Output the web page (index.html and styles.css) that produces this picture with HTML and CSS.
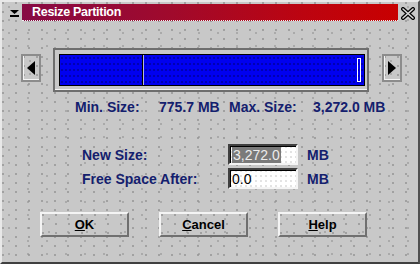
FILE: index.html
```html
<!DOCTYPE html>
<html lang="en">
<head>
    <meta charset="UTF-8">
    <title>Resize Partition</title>
    <link rel="stylesheet" href="styles.css">
</head>
<body>
    <div class="window dotted">
        <div class="titlebar">
            <div class="menu-btn">
                <svg width="9" height="7" viewBox="0 0 9 7">
                    <polygon points="0,0 9,0 4.5,4" fill="#000"/>
                    <rect x="0" y="5" width="9" height="2" fill="#000"/>
                </svg>
            </div>
            <div class="title">Resize Partition</div>
            <div class="close-btn">
                <svg width="14" height="13" viewBox="0 0 14 13">
                    <path d="M2 2 L12 11 M12 2 L2 11" stroke="#000" stroke-width="4" stroke-linecap="round"/>
                    <path d="M2 2 L12 11 M12 2 L2 11" stroke="#d8d8d8" stroke-width="1.6" stroke-linecap="round"/>
                </svg>
            </div>
        </div>

        <div class="slider-row">
            <button class="arrow-btn dotted">
                <svg width="8" height="14" viewBox="0 0 8 14"><polygon points="8,0 8,14 0,7" fill="#000"/></svg>
            </button>
            <div class="track">
                <div class="track-inner">
                    <div class="seg seg-used"></div>
                    <div class="seg seg-free"><span class="handle"></span></div>
                </div>
            </div>
            <button class="arrow-btn dotted">
                <svg width="8" height="14" viewBox="0 0 8 14"><polygon points="0,0 0,14 8,7" fill="#000"/></svg>
            </button>
        </div>

        <div class="size-info">
            <span>Min. Size:</span>
            <span>775.7 MB</span>
            <span>Max. Size:</span>
            <span>3,272.0 MB</span>
        </div>

        <div class="size-form">
            <label>New Size:</label>
            <div class="field"><span class="selected">3,272.0</span></div>
            <span class="unit">MB</span>

            <label>Free Space After:</label>
            <div class="field"><span>0.0</span></div>
            <span class="unit">MB</span>
        </div>

        <div class="actions">
            <button class="btn dotted"><u>O</u>K</button>
            <button class="btn dotted"><u>C</u>ancel</button>
            <button class="btn dotted"><u>H</u>elp</button>
        </div>
    </div>
</body>
</html>
```

FILE: styles.css
```css
* {
    margin: 0;
    padding: 0;
    box-sizing: border-box;
    font-family: 'Liberation Sans', Arial, sans-serif;
}

body {
    background: #c8c8c8;
}

/* speckled motif-style background */
.dotted {
    background-color: #c8c8c8;
    background-image:
        radial-gradient(circle at 1px 1px, #8c8c8c 0.6px, transparent 0.9px),
        radial-gradient(circle at 1px 1px, #9a9a9a 0.6px, transparent 0.9px);
    background-size: 13px 9px, 19px 13px;
    background-position: 0 0, 6px 4px;
}

.window {
    width: 420px;
    height: 264px;
    border: 2px solid;
    border-color: #e8e8e8 #505050 #404040 #e8e8e8;
}

.titlebar {
    display: flex;
    margin-top: 2px;
    height: 17px;
}

.menu-btn {
    width: 20px;
    display: flex;
    align-items: center;
    justify-content: center;
    padding-left: 4px;
    padding-top: 1px;
}

.title {
    width: 376px;
    background: linear-gradient(90deg, #870a44, #a00a2c 40%, #bc0410 75%, #c80000);
    color: #ffffff;
    font-weight: bold;
    font-size: 12.5px;
    letter-spacing: -0.3px;
    line-height: 17px;
    padding-left: 10px;
    border-bottom: 1px dotted #f0f0f0;
}

.close-btn {
    flex: 1;
    display: flex;
    align-items: center;
    justify-content: center;
    padding-top: 2px;
}

.slider-row {
    display: flex;
    align-items: flex-start;
    margin-top: 27px;
    padding-left: 19px;
}

.arrow-btn {
    width: 20px;
    height: 28px;
    margin-top: 6px;
    border: 2px solid #8c8c8c;
    box-shadow: inset 1px -1px 0 #f4f4f4;
    display: flex;
    align-items: center;
    justify-content: center;
    padding-right: 1px;
}

.track {
    width: 316px;
    height: 44px;
    margin: 0 13px 0 12px;
    border: 2px solid #6e6e6e;
    padding: 4px 2px 4px 4px;
    box-shadow: inset 0 -1px 0 #f4f4f4;
    background: #c8c8c8;
}

.track-inner {
    display: flex;
    height: 100%;
    border: 1px solid #000;
}

.seg {
    background-color: #0000f0;
    background-image: radial-gradient(circle at 1px 1px, #000090 0.6px, transparent 0.9px);
    background-size: 4px 6px;
    background-position: 1px 2px;
}

.seg-used {
    width: 83px;
    border-right: 1px solid #000;
}

.seg-free {
    flex: 1;
    border-left: 1px solid #b8b8d8;
    display: flex;
    align-items: center;
    justify-content: flex-end;
    padding-right: 3px;
}

.handle {
    width: 4px;
    height: 24px;
    border: 1px solid #ffffff;
}

.size-info {
    display: grid;
    grid-template-columns: 84px 70px 84px auto;
    margin-top: 7px;
    padding-left: 73px;
    color: #14206e;
    font-weight: bold;
    font-size: 14px;
    line-height: 16px;
}

.size-form {
    display: grid;
    grid-template-columns: 146px 70px auto;
    row-gap: 3px;
    margin-top: 29px;
    padding-left: 80px;
    color: #14206e;
    font-weight: bold;
    font-size: 14px;
    align-items: center;
}

.field {
    height: 21px;
    border: 2px solid;
    border-color: #404040 #f4f4f4 #f4f4f4 #404040;
    box-shadow: inset 1px 1px 0 #000;
    background-color: #ffffff;
    background-image: radial-gradient(circle at 1px 1px, #d4d4d4 0.6px, transparent 0.9px);
    background-size: 5px 5px;
    padding: 1px 0 0 2px;
    font-weight: normal;
    font-size: 14px;
    line-height: 16px;
    color: #000;
}

.field .selected {
    display: inline-block;
    background: #7a7a7a;
    color: #ececec;
    padding: 0 1px;
}

.unit {
    padding-left: 9px;
}

.actions {
    display: flex;
    gap: 30px;
    margin-top: 23px;
    padding-left: 38px;
}

.btn {
    width: 89px;
    height: 25px;
    border: 2px solid;
    border-color: #f4f4f4 #707070 #707070 #f4f4f4;
    font-weight: bold;
    font-size: 13px;
    color: #000;
}
```
